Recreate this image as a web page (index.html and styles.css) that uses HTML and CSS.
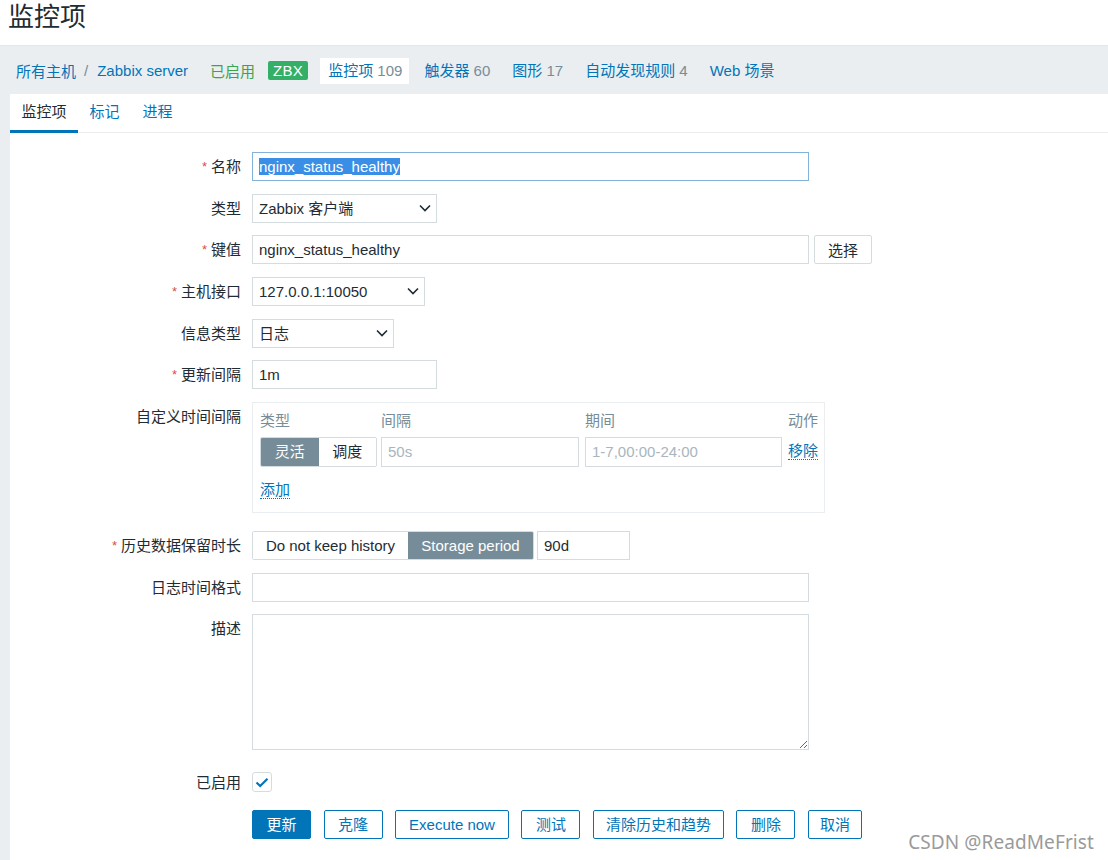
FILE: index.html
```html
<!DOCTYPE html>
<html lang="zh-CN">
<head>
<meta charset="utf-8">
<title>监控项</title>
<link rel="stylesheet" href="styles.css">
</head>
<body>
<h1 class="page-title">监控项</h1>
<nav class="header-nav">
  <a class="crumb">所有主机</a><span class="sep">/</span><a class="crumb">Zabbix server</a>
  <span class="status-green">已启用</span>
  <span class="badge-zbx">ZBX</span>
  <ul class="subnav">
    <li class="active"><a>监控项</a> <span class="count">109</span></li>
    <li><a>触发器</a> <span class="count">60</span></li>
    <li><a>图形</a> <span class="count">17</span></li>
    <li><a>自动发现规则</a> <span class="count">4</span></li>
    <li><a>Web 场景</a></li>
  </ul>
</nav>
<div class="workspace">
  <div class="panel">
    <div class="tabs">
      <a class="tab active">监控项</a>
      <a class="tab">标记</a>
      <a class="tab">进程</a>
    </div>
    <form class="form">
      <div class="row">
        <label class="lbl"><span class="req">*</span>名称</label>
        <div class="field"><div class="input focus w-long"><span class="sel">nginx_status_healthy</span></div></div>
      </div>
      <div class="row">
        <label class="lbl">类型</label>
        <div class="field"><div class="select w-185"><span>Zabbix 客户端</span><svg class="chev" width="12" height="8" viewBox="0 0 12 8"><path d="M1 1.5 L6 6.5 L11 1.5" fill="none" stroke="#1f2c33" stroke-width="1.6"/></svg></div></div>
      </div>
      <div class="row">
        <label class="lbl"><span class="req">*</span>键值</label>
        <div class="field"><div class="input w-long">nginx_status_healthy</div><button type="button" class="btn-grey">选择</button></div>
      </div>
      <div class="row">
        <label class="lbl"><span class="req">*</span>主机接口</label>
        <div class="field"><div class="select w-173"><span>127.0.0.1:10050</span><svg class="chev" width="12" height="8" viewBox="0 0 12 8"><path d="M1 1.5 L6 6.5 L11 1.5" fill="none" stroke="#1f2c33" stroke-width="1.6"/></svg></div></div>
      </div>
      <div class="row">
        <label class="lbl">信息类型</label>
        <div class="field"><div class="select w-142"><span>日志</span><svg class="chev" width="12" height="8" viewBox="0 0 12 8"><path d="M1 1.5 L6 6.5 L11 1.5" fill="none" stroke="#1f2c33" stroke-width="1.6"/></svg></div></div>
      </div>
      <div class="row">
        <label class="lbl"><span class="req">*</span>更新间隔</label>
        <div class="field"><div class="input w-185">1m</div></div>
      </div>
      <div class="row row-intervals">
        <label class="lbl">自定义时间间隔</label>
        <div class="field">
          <div class="interval-box">
            <div class="ib-grid">
              <div class="ib-head">类型</div>
              <div class="ib-head">间隔</div>
              <div class="ib-head">期间</div>
              <div class="ib-head">动作</div>
              <div class="seg seg-tall"><span class="seg-item on">灵活</span><span class="seg-item">调度</span></div>
              <div class="input input-tall ph w-198">50s</div>
              <div class="input input-tall ph w-197">1-7,00:00-24:00</div>
              <div class="ib-action"><a class="link">移除</a></div>
            </div>
            <div class="ib-add"><a class="link">添加</a></div>
          </div>
        </div>
      </div>
      <div class="row">
        <label class="lbl"><span class="req">*</span>历史数据保留时长</label>
        <div class="field"><div class="seg"><span class="seg-item first">Do not keep history</span><span class="seg-item second on">Storage period</span></div><div class="input w-93">90d</div></div>
      </div>
      <div class="row">
        <label class="lbl">日志时间格式</label>
        <div class="field"><div class="input w-long"></div></div>
      </div>
      <div class="row">
        <label class="lbl">描述</label>
        <div class="field"><textarea class="textarea"></textarea></div>
      </div>
      <div class="row row-check">
        <label class="lbl">已启用</label>
        <div class="field"><span class="checkbox"><svg width="14" height="11" viewBox="0 0 14 11"><path d="M1.5 5.5 L5.2 9 L12.5 1.8" fill="none" stroke="#0275b8" stroke-width="2.2"/></svg></span></div>
      </div>
      <div class="row row-buttons">
        <span class="lbl"></span>
        <div class="field buttons">
          <button type="button" class="btn primary">更新</button>
          <button type="button" class="btn">克隆</button>
          <button type="button" class="btn mid">Execute now</button>
          <button type="button" class="btn">测试</button>
          <button type="button" class="btn long">清除历史和趋势</button>
          <button type="button" class="btn">删除</button>
          <button type="button" class="btn narrow">取消</button>
        </div>
      </div>
    </form>
  </div>
</div>
<div class="watermark">CSDN @ReadMeFrist</div>
</body>
</html>
```

FILE: styles.css
```css
* { box-sizing: border-box; }
html, body { margin: 0; padding: 0; }
body {
  width: 1108px;
  height: 860px;
  overflow: hidden;
  background: #ffffff;
  color: #1f2c33;
  font-family: "Liberation Sans", "Noto Sans CJK SC", sans-serif;
  font-size: 15px;
  position: relative;
}
a { color: #0275b8; text-decoration: none; cursor: pointer; }

.page-title {
  margin: 0;
  height: 45px;
  padding: 0 0 0 8px;
  font-weight: normal;
  font-size: 26px;
  line-height: 34px;
  color: #1f2c33;
}

.header-nav {
  height: 49px;
  background: #ebeef0;
  border-top: 1px solid #e3e7ea;
  display: flex;
  align-items: center;
  padding-left: 16px;
  padding-top: 1px;
}
.crumb { color: #0275b8; }
.sep { color: #768d99; margin: 0 9px 0 8px; }
.status-green { color: #3da34f; margin-left: 22px; }
.badge-zbx {
  margin-left: 13px;
  background: #34af67;
  color: #fff;
  font-size: 15px;
  line-height: 19px;
  padding: 0 5px;
  border-radius: 2px;
  letter-spacing: 0.3px;
}
.subnav {
  list-style: none;
  margin: 0 0 0 12px;
  padding: 0;
  display: flex;
  align-items: center;
}
.subnav li {
  padding: 0 11px;
  line-height: 26px;
  height: 26px;
}
.subnav li.active { background: #fff; padding: 0 7px 0 8px; margin-right: 4px; }
.count { color: #768d99; }

.workspace {
  background: #ebeef0;
  padding-left: 10px;
  height: 766px;
}
.panel {
  background: #fff;
  height: 100%;
}

.tabs {
  display: flex;
  height: 39px;
  border-bottom: 1px solid #ebeef0;
}
.tab {
  padding: 0 11.5px;
  line-height: 36px;
  height: 39px;
  color: #0275b8;
  border-bottom: 3px solid transparent;
}
.tab.active { color: #1f2c33; border-bottom-color: #0275b8; }

.form {
  padding-top: 19px;
  display: flex;
  flex-direction: column;
  gap: 12.67px;
}
.row {
  display: grid;
  grid-template-columns: 231px 1fr;
  column-gap: 11px;
}
.lbl {
  text-align: right;
  line-height: 29px;
  height: 29px;
  color: #1f2c33;
  white-space: nowrap;
}
.req { color: #d64e4e; font-size: 13px; margin-right: 4px; position: relative; top: -1px; }
.field { display: flex; align-items: flex-start; }

.input {
  height: 29px;
  border: 1px solid #d5dce0;
  padding: 0 6px;
  line-height: 27px;
  background: #fff;
  white-space: nowrap;
  overflow: hidden;
}
.input.focus { border-color: #84b3d9; }
.sel { background: #3a8ee6; color: #fff; }
.w-long { width: 557px; }
.w-185 { width: 185px; }
.w-198 { width: 198px; }
.w-197 { width: 197px; }
.w-93 { width: 93px; margin-left: 3px; }
.ph { color: #a9b6bd; }
.input-tall { height: 30px; line-height: 28px; }

.select {
  height: 29px;
  border: 1px solid #d5dce0;
  padding: 0 5px 0 6px;
  line-height: 27px;
  display: flex;
  justify-content: space-between;
  align-items: center;
  background: #fff;
}
.w-173 { width: 173px; }
.w-142 { width: 142px; }
.chev { display: block; }

.btn-grey {
  margin-left: 5px;
  height: 29px;
  width: 58px;
  border: 1px solid #d5dce0;
  border-radius: 2px;
  background: #fff;
  color: #1f2c33;
  font: inherit;
  padding: 0;
}

.row-intervals { margin-bottom: 5.3px; }
.interval-box {
  width: 573px;
  height: 111px;
  border: 1px solid #ebeef0;
  padding: 6px 6px 0 7px;
}
.ib-grid {
  display: grid;
  grid-template-columns: 121px 204px 203px 30px;
  grid-template-rows: 23px 30px;
  row-gap: 5px;
}
.ib-head { color: #768d99; line-height: 24px; height: 23px; white-space: nowrap; }
.ib-action { line-height: 28px; height: 30px; white-space: nowrap; }
.ib-add { margin-top: 12px; line-height: 22px; height: 22px; }
.link { color: #0275b8; border-bottom: 1px dotted #0275b8; }

.seg {
  display: flex;
  height: 29px;
  border: 1px solid #d5dce0;
  border-radius: 2px;
  overflow: hidden;
}
.seg-tall { height: 30px; width: 117px; }
.seg-item {
  flex: 1;
  text-align: center;
  line-height: 27px;
  height: 27px;
  color: #1f2c33;
  background: #fff;
  white-space: nowrap;
}
.seg-tall .seg-item { line-height: 28px; height: 28px; }
.seg-item.first { flex: none; width: 155px; }
.seg-item.second { flex: none; width: 125px; }
.seg-item.on { background: #768d99; color: #fff; }

.textarea {
  width: 557px;
  height: 136px;
  border: 1px solid #d5dce0;
  margin: 0;
  padding: 4px 6px;
  font: inherit;
  display: block;
}

.row-check { margin-top: 5px; }
.row-check .field { align-items: center; height: 29px; }
.checkbox {
  width: 20px;
  height: 20px;
  border: 1px solid #d5dce0;
  border-radius: 3px;
  display: flex;
  align-items: center;
  justify-content: center;
}

.row-buttons { margin-top: 0.5px; }
.buttons { gap: 12.5px; }
.btn {
  height: 29px;
  padding: 0 13.5px;
  border: 1px solid #0275b8;
  border-radius: 2px;
  background: #fff;
  color: #0275b8;
  font: inherit;
  line-height: 27px;
}
.btn.mid { padding: 0 13px; }
.btn.long { padding: 0 12px; }
.btn.narrow { padding: 0 11px; }
.btn.primary { background: #0275b8; color: #fff; }

.watermark {
  position: absolute;
  right: 14px;
  bottom: 5px;
  font-family: "Noto Sans", "Liberation Sans", sans-serif;
  font-size: 19px;
  line-height: 26px;
  color: #9a9a9a;
  letter-spacing: 0.1px;
}
```
